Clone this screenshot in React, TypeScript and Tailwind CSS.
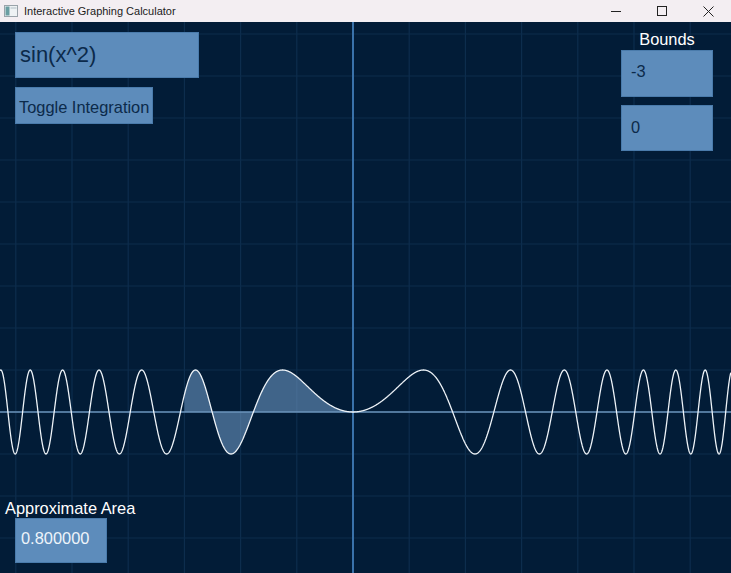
import React from "react";

const W = 731;
const H = 551;
const OX = 353;
const OY = 390;
const SX = 56.2;
const SY = 42;

const px = (x: number) => OX + x * SX;
const py = (y: number) => OY - y * SY;

function curvePath(x0: number, x1: number, step = 0.004) {
  let d = "";
  for (let x = x0; x <= x1 + 1e-9; x += step) {
    const y = Math.sin(x * x);
    d += `${d ? "L" : "M"}${px(x).toFixed(2)},${py(y).toFixed(2)}`;
  }
  return d;
}

function Graph() {
  const xMin = -OX / SX;
  const xMax = (W - OX) / SX;
  const curve = curvePath(xMin, xMax);
  const area = `${curvePath(-3, 0)}L${px(0)},${OY}L${px(-3)},${OY}Z`;

  const vLines: number[] = [];
  for (let k = -7; k <= 7; k++) vLines.push(px(k));
  const hLines: number[] = [];
  for (let k = -4; k <= 10; k++) hLines.push(py(k));

  return (
    <svg
      className="absolute inset-0"
      width={W}
      height={H}
      viewBox={`0 0 ${W} ${H}`}
    >
      {vLines.map((x, i) => (
        <line key={`v${i}`} x1={x} y1={0} x2={x} y2={H} stroke="#0d2d4d" strokeWidth={1.2} />
      ))}
      {hLines.map((y, i) => (
        <line key={`h${i}`} x1={0} y1={y} x2={W} y2={y} stroke="#0d2d4d" strokeWidth={1.2} />
      ))}
      <path d={area} fill="#6a94bf" fillOpacity={0.6} />
      <line x1={OX} y1={0} x2={OX} y2={H} stroke="#3a72aa" strokeWidth={2} />
      <line x1={0} y1={OY} x2={W} y2={OY} stroke="#6b93bb" strokeWidth={1.4} />
      <path d={curve} fill="none" stroke="#eef3f8" strokeWidth={1.3} strokeLinejoin="round" />
    </svg>
  );
}

function TitleBar() {
  return (
    <div className="h-[22px] flex items-center bg-[#f3eef2] shrink-0">
      <svg className="ml-[4px] w-[14px] h-[12px]" viewBox="0 0 14 12">
        <rect x="0.5" y="0.5" width="13" height="11" fill="#eef2f4" stroke="#9aa3aa" />
        <rect x="1.5" y="1.5" width="4" height="9" fill="#6a9ea2" />
        <rect x="6.5" y="2" width="6" height="2" fill="#d0d8dd" />
      </svg>
      <span className="ml-[6px] text-[11px] text-[#1b1b1b] leading-none">Interactive Graphing Calculator</span>
      <div className="ml-auto flex items-center h-full">
        <div className="w-[46px] h-full flex items-center justify-center">
          <div className="w-[10px] h-px bg-[#222]" />
        </div>
        <div className="w-[46px] h-full flex items-center justify-center">
          <div className="w-[10px] h-[10px] border border-[#222]" />
        </div>
        <div className="w-[46px] h-full flex items-center justify-center">
          <svg className="w-[11px] h-[11px]" viewBox="0 0 11 11">
            <path d="M0.5 0.5L10.5 10.5M10.5 0.5L0.5 10.5" stroke="#222" strokeWidth={1} />
          </svg>
        </div>
      </div>
    </div>
  );
}

const box = "bg-[#5d8cbb] border border-[#4a7bab] flex items-center";

export default function App() {
  return (
    <div
      className="w-[731px] h-[573px] flex flex-col overflow-hidden"
      style={{ fontFamily: '"Liberation Sans", Arial, sans-serif' }}
    >
      <TitleBar />
      <div className="relative flex-1 bg-[#021c37] overflow-hidden">
        <Graph />
        <div className="relative h-full flex flex-col justify-between">
          <div className="flex justify-between items-start pl-[15px] pr-[18px]">
            <div className="flex flex-col items-start gap-[9px] mt-[10px]">
              <div className={`${box} w-[184px] h-[46px] pl-[4px]`}>
                <span className="text-[22px] text-[#0c2a4a] leading-none">sin(x^2)</span>
              </div>
              <div className={`${box} w-[138px] h-[37px] pl-[3px] pt-[3px]`}>
                <span className="text-[16.4px] text-[#0c2a4a] leading-none">Toggle Integration</span>
              </div>
            </div>
            <div className="flex flex-col items-center mt-[6px]">
              <span className="text-[16.4px] text-white leading-[22px]">Bounds</span>
              <div className={`${box} w-[92px] h-[47px] pl-[9px] pb-[4px]`}>
                <span className="text-[16.4px] text-[#0c2a4a] leading-none">-3</span>
              </div>
              <div className={`${box} w-[92px] h-[46px] pl-[9px] mt-[8px] pb-[2px]`}>
                <span className="text-[16.4px] text-[#0c2a4a] leading-none">0</span>
              </div>
            </div>
          </div>
          <div className="flex flex-col items-start pl-[5px] pb-[10px]">
            <span className="text-[16.4px] text-white leading-[20px]">Approximate Area</span>
            <div className={`${box} w-[92px] h-[45px] pl-[5px] ml-[10px] pb-[5px]`}>
              <span className="text-[16.4px] text-[#eef4fa] leading-none">0.800000</span>
            </div>
          </div>
        </div>
      </div>
    </div>
  );
}
